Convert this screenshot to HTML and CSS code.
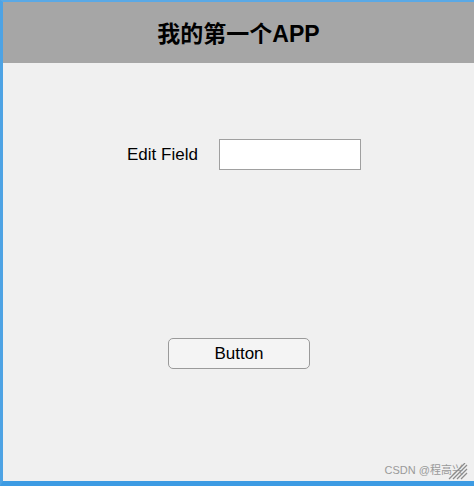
FILE: index.html
```html
<!DOCTYPE html>
<html lang="zh">
<head>
<meta charset="utf-8">
<title>我的第一个APP</title>
<link rel="stylesheet" href="styles.css">
</head>
<body>
<div class="app">
  <header class="titlebar">我的第一个APP</header>
  <main class="content">
    <div class="field-row">
      <label class="field-label" for="ef">Edit Field</label>
      <input class="field-input" id="ef" type="text">
    </div>
    <div class="button-row">
      <button class="btn" type="button">Button</button>
    </div>
  </main>
  <div class="watermark">CSDN @程高兴</div>
  <svg class="grip" width="22" height="17" viewBox="0 0 22 17">
    <g stroke="#8c8c8c" stroke-width="1.2">
      <line x1="3" y1="16" x2="19" y2="0"/>
      <line x1="7" y1="16" x2="21" y2="2"/>
      <line x1="11" y1="16" x2="21" y2="6"/>
      <line x1="15" y1="16" x2="21" y2="10"/>
    </g>
  </svg>
</div>
</body>
</html>
```

FILE: styles.css
```css
html, body {
  margin: 0;
  padding: 0;
  width: 474px;
  height: 486px;
  overflow: hidden;
  font-family: "Liberation Sans", Arial, "Noto Sans CJK SC", sans-serif;
}

.app {
  position: relative;
  box-sizing: border-box;
  width: 474px;
  height: 486px;
  border-top: 2px solid #5aa9e6;
  border-left: 3px solid #4ea3e4;
  border-bottom: 5px solid #3d9be3;
  background: #f0f0f0;
  display: flex;
  flex-direction: column;
}

.titlebar {
  height: 60px;
  background: #a6a6a6;
  color: #000;
  font-weight: bold;
  font-size: 23px;
  font-family: "Liberation Sans", Arial, "Noto Sans CJK SC", sans-serif;
  display: flex;
  align-items: center;
  justify-content: center;
  padding-bottom: 1px;
}

.content {
  flex: 1;
  display: flex;
  flex-direction: column;
  padding-top: 76px;
}

.field-row {
  display: flex;
  align-items: center;
  padding-left: 124px;
  height: 31px;
}

.field-label {
  font-size: 17px;
  color: #000;
  width: 92px;
}

.field-input {
  box-sizing: border-box;
  width: 142px;
  height: 31px;
  margin: 0;
  border: 1px solid #a0a0a0;
  background: #fff;
  padding: 0 4px;
  font: inherit;
  outline: none;
}

.button-row {
  padding-left: 165px;
  margin-top: 168px;
}

.btn {
  box-sizing: border-box;
  width: 142px;
  height: 31px;
  margin: 0;
  border: 1px solid #9a9a9a;
  border-radius: 5px;
  background: #f4f4f4;
  color: #000;
  font-family: "Liberation Sans", Arial, sans-serif;
  font-size: 17px;
  padding: 0;
}

.watermark {
  position: absolute;
  right: 11px;
  bottom: 4px;
  font-size: 11px;
  color: #9a9a9a;
  font-family: "Liberation Sans", Arial, "Noto Sans CJK SC", sans-serif;
}

.grip {
  position: absolute;
  right: 6px;
  bottom: 1px;
}
```
